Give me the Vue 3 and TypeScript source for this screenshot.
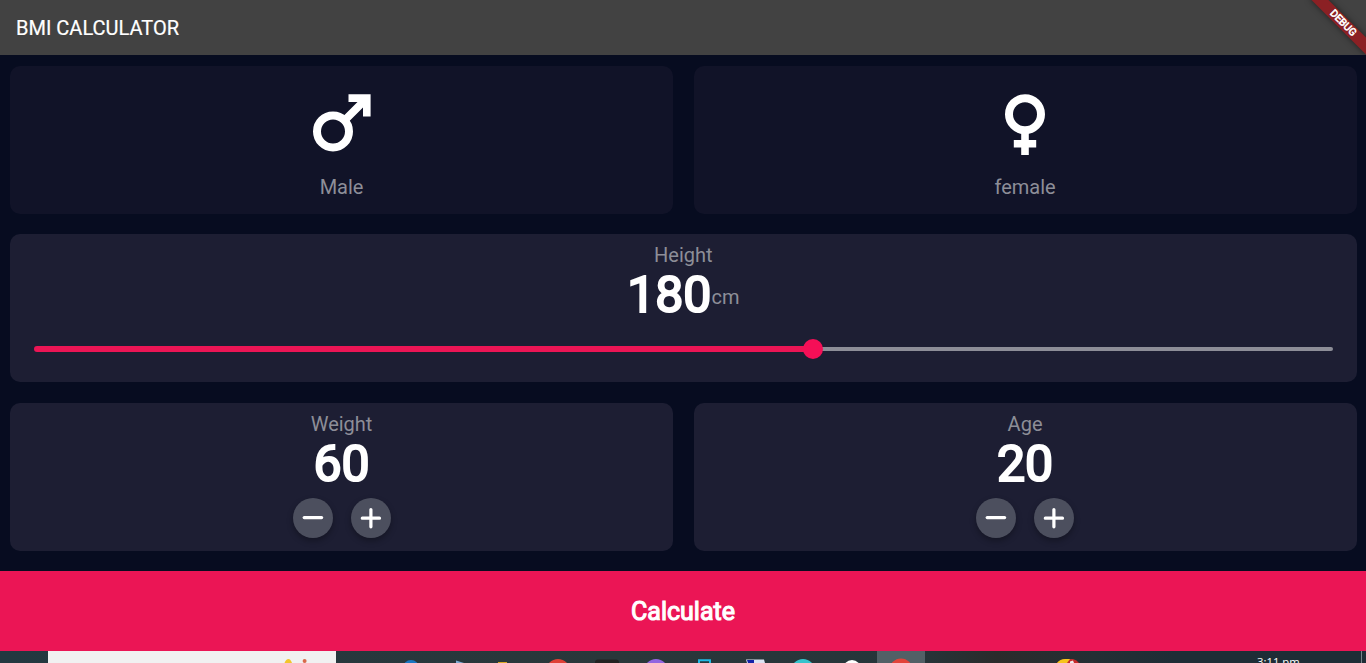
<script setup lang="ts">
import { ref, computed } from 'vue'

const MIN_HEIGHT = 120
const MAX_HEIGHT = 220

const height = ref(180)
const selected = ref<'male' | 'female' | null>(null)
const counters = ref([
  { label: 'Weight', value: 60 },
  { label: 'Age', value: 20 },
])
const percent = computed(() => ((height.value - MIN_HEIGHT) / (MAX_HEIGHT - MIN_HEIGHT)) * 100)
</script>

<template>
  <div class="screen">
    <header class="app-bar">
      <h1>BMI CALCULATOR</h1>
      <div class="banner-clip"><div class="banner">DEBUG</div></div>
    </header>

    <main class="body">
      <section class="row">
        <div class="card gender" :class="{ active: selected === 'male' }" @click="selected = 'male'">
          <svg class="gender-icon" viewBox="0 0 60 70" width="60" height="70">
            <circle cx="21" cy="42.4" r="16" fill="none" stroke="#fff" stroke-width="8" />
            <path d="M36.5 5.2H58.6V27.4H51V18.4L35.2 34.2L29.7 28.7L45.5 12.9H36.5Z" fill="#fff" />
          </svg>
          <span class="label">Male</span>
        </div>
        <div class="card gender" :class="{ active: selected === 'female' }" @click="selected = 'female'">
          <svg class="gender-icon" viewBox="0 0 60 70" width="60" height="70">
            <circle cx="30" cy="25.2" r="16" fill="none" stroke="#fff" stroke-width="8" />
            <path d="M26.2 43H33.8V51H41.2V58.6H33.8V66H26.2V58.6H18.8V51H26.2Z" fill="#fff" />
          </svg>
          <span class="label">female</span>
        </div>
      </section>

      <section class="row">
        <div class="card active">
          <span class="label">Height</span>
          <div class="value-line">
            <span class="number">{{ height }}</span><span class="label unit">cm</span>
          </div>
          <div class="slider">
            <div class="filled" :style="{ width: percent + '%' }"></div>
            <div class="thumb"></div>
            <div class="rest"></div>
          </div>
        </div>
      </section>

      <section class="row">
        <div v-for="c in counters" :key="c.label" class="card active">
          <span class="label">{{ c.label }}</span>
          <span class="number">{{ c.value }}</span>
          <div class="buttons">
            <button class="round" @click="c.value--">
              <svg viewBox="0 0 40 40" width="40" height="40"><path d="M11.2 19.6H28.6" /></svg>
            </button>
            <button class="round" @click="c.value++">
              <svg viewBox="0 0 40 40" width="40" height="40"><path d="M11.3 20.2H28.5M19.9 11.6V28.8" /></svg>
            </button>
          </div>
        </div>
      </section>
    </main>

    <button class="calculate">Calculate</button>

    <footer class="taskbar">
      <svg viewBox="0 0 1366 12" width="1366" height="12">
        <defs>
          <linearGradient id="bar" x1="0" x2="1" y1="0" y2="0">
            <stop offset="0" stop-color="#233840" />
            <stop offset="0.45" stop-color="#2a373a" />
            <stop offset="0.67" stop-color="#26353a" />
            <stop offset="0.73" stop-color="#2b2b2b" />
            <stop offset="0.8" stop-color="#242f34" />
            <stop offset="0.86" stop-color="#1e2d36" />
            <stop offset="1" stop-color="#1e2d36" />
          </linearGradient>
        </defs>
        <rect width="1366" height="12" fill="url(#bar)" />
        <rect x="48" y="0" width="288" height="12" fill="#f1f1f1" />
        <path d="M284.5 12Q286 8 288.5 8Q290.5 8 292 12Z" fill="#f2c52c" />
        <circle cx="304.6" cy="10" r="2" fill="#d9694a" />
        <circle cx="411" cy="17" r="8" fill="#1976c2" />
        <path d="M456 9.5L464 12H456Z" fill="#7eabd4" />
        <path d="M498 12V11H507V12Z" fill="#d8a621" />
        <circle cx="558" cy="20" r="12" fill="#df4036" />
        <rect x="595" y="8.5" width="24" height="8" rx="3" fill="#222" />
        <circle cx="656" cy="20" r="12" fill="#9265e0" />
        <path d="M699 12V9.2H710V12" fill="none" stroke="#20b9e5" stroke-width="2" />
        <path d="M746 8.5H764L765 12H747Z" fill="#dce3f2" />
        <path d="M747 9H754V12H748Z" fill="#1421a8" />
        <circle cx="803" cy="20" r="12" fill="#35c4cd" />
        <circle cx="852" cy="18" r="9" fill="#fff" />
        <rect x="877" y="0" width="48" height="12" fill="#526066" />
        <circle cx="901" cy="19" r="11.5" fill="#e2433a" />
        <path d="M1057 12Q1061 8 1067 8H1073Q1077 9 1079 12Z" fill="#c62c2c" />
        <path d="M1057 12Q1060 8 1065 8H1070L1067 12Z" fill="#f6c51d" />
        <path d="M1070 10.5L1073 9.5L1074 12H1070Z" fill="#eee" />
        <rect x="1361" y="0" width="1" height="12" fill="#77838a" />
      </svg>
      <span class="clock">3:11 pm</span>
    </footer>
  </div>
</template>

<style>
body {
  margin: 0;
  overflow: hidden;
}
</style>

<style scoped>
.screen {
  width: 1366px;
  height: 663px;
  display: flex;
  flex-direction: column;
  overflow: hidden;
  background: #070c20;
  font-family: Roboto, "Liberation Sans", sans-serif;
  color: #fff;
}
.app-bar {
  position: relative;
  height: 55px;
  flex: none;
  display: flex;
  align-items: center;
  padding-left: 16px;
  background: #424242;
}
h1 {
  margin: 0;
  font-size: 20px;
  font-weight: 400;
  line-height: 24px;
  -webkit-text-stroke: 0.2px #fff;
}
.banner-clip {
  position: absolute;
  top: 0;
  right: 0;
  width: 80px;
  height: 55px;
  overflow: hidden;
}
.banner {
  position: absolute;
  left: 17px;
  top: 17px;
  width: 80px;
  height: 12px;
  transform: rotate(45deg);
  background: #8b2024;
  box-shadow: 0 0 6px rgba(0, 0, 0, 0.5);
  font-size: 10.2px;
  font-weight: 400;
  -webkit-text-stroke: 0.6px #fff;
  line-height: 12px;
  text-align: center;
}
.body {
  flex: 1;
  display: grid;
  grid-template-rows: repeat(3, 1fr);
  gap: 20.4px;
  padding: 10.6px 9.4px 20.4px 10px;
}
.row {
  display: flex;
  gap: 20.4px;
  min-height: 0;
}
.card {
  flex: 1;
  display: flex;
  flex-direction: column;
  align-items: center;
  border-radius: 10px;
  background: #111328;
  box-sizing: border-box;
  padding-top: 10px;
}
.card.active {
  background: #1d1e33;
}
.card.gender {
  padding-top: 23px;
}
.gender .label {
  margin-top: 17px;
}
.gender-icon {
  display: block;
}
.label {
  font-size: 20px;
  line-height: 23px;
  color: #8d8e98;
}
.unit {
  margin-top: 3px;
}
.number {
  font-size: 50px;
  font-weight: 400;
  line-height: 57px;
  -webkit-text-stroke: 2.2px #fff;
}
.value-line {
  display: flex;
  align-items: center;
}
.slider {
  align-self: stretch;
  display: flex;
  align-items: center;
  margin: 15px 24px 0;
  height: 20px;
}
.filled {
  height: 6px;
  border-radius: 3px;
  background: #eb1555;
}
.thumb {
  flex: none;
  width: 20px;
  height: 20px;
  margin: 0 -10px;
  border-radius: 50%;
  background: #f50f57;
  z-index: 1;
}
.rest {
  flex: 1;
  height: 4px;
  border-radius: 2px;
  background: #8d8e98;
}
.buttons {
  display: flex;
  gap: 18px;
  margin-top: 5px;
}
.round {
  width: 40px;
  height: 40px;
  padding: 0;
  border: 0;
  border-radius: 50%;
  background: #4c4f5e;
  box-shadow: 0 3px 6px rgba(0, 0, 0, 0.3);
}
.round svg {
  display: block;
}
.round path {
  fill: none;
  stroke: #fff;
  stroke-width: 3.2;
  stroke-linecap: round;
}
.calculate {
  flex: none;
  height: 80px;
  padding: 0;
  border: 0;
  background: #eb1555;
  color: #fff;
  font-family: inherit;
  font-size: 25px;
  font-weight: 400;
  -webkit-text-stroke: 1.1px #fff;
}
.taskbar {
  position: relative;
  flex: none;
  height: 12px;
  overflow: hidden;
}
.taskbar svg {
  display: block;
}
.clock {
  position: absolute;
  left: 1257px;
  top: 4px;
  font-family: "Open Sans", sans-serif;
  font-size: 11.3px;
  line-height: 14px;
  white-space: nowrap;
}
</style>
